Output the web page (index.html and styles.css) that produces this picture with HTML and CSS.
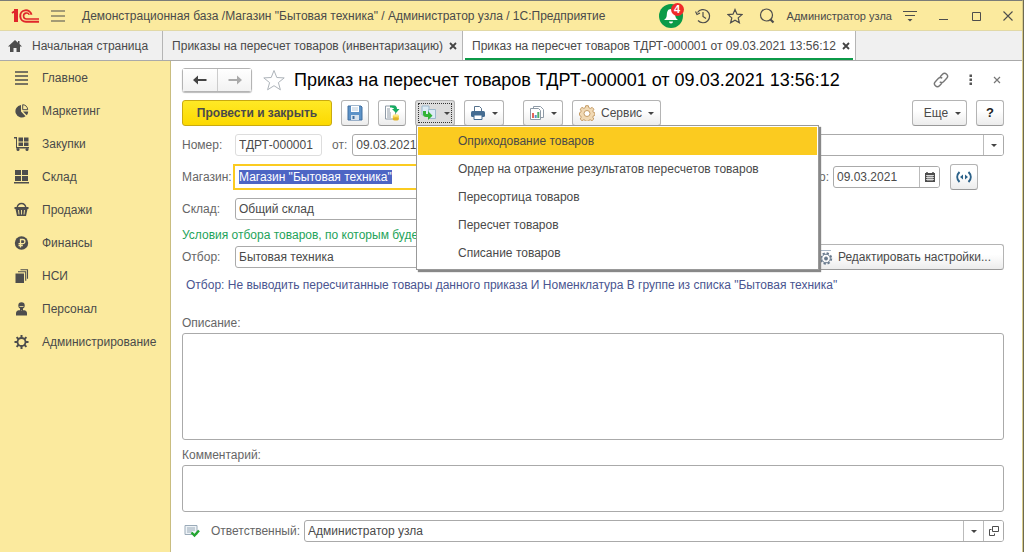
FILE: index.html
```html
<!DOCTYPE html>
<html lang="ru">
<head>
<meta charset="utf-8">
<title>Приказ на пересчет товаров</title>
<link rel="stylesheet" href="styles.css">
</head>
<body>
<div class="window">
  <header class="titlebar">
    <svg class="logo" viewBox="0 0 30 16" width="30" height="16" fill="none" stroke="#e0262b" stroke-width="2"><path d="M1 5l3-2v11M3 2h3v12"/><path d="M28 13.700H15a5.700 5.700 0 1 1 5.500-7"/><path d="M28 11H15.500a3 3 0 1 1 2.800-4.200" stroke-width="1.600"/></svg>
    <button class="icon-btn menu-btn" aria-label="Меню"><svg width="14" height="14" viewBox="0 0 14 14" stroke="#4d4d4d" stroke-width="1.200"><path d="M0 2h14M0 7h14M0 12h14"/></svg></button>
    <div class="app-title">Демонстрационная база /Магазин "Бытовая техника" / Администратор узла / 1С:Предприятие</div>
    <div class="title-tools">
      <button class="icon-btn bell" aria-label="Уведомления"><svg width="24" height="24" viewBox="0 0 24 24"><circle cx="12" cy="12" r="12" fill="#0b9a48"/><path d="M12 5c-3.500 0-4 3-4.200 6-.200 2.500-1 3.500-2.800 5h14c-1.800-1.500-2.600-2.500-2.800-5C16 8 15.500 5 12 5zM10 17.500h4a2 2 0 0 1-4 0z" fill="#fff"/></svg><span class="badge">4</span></button>
      <button class="icon-btn" aria-label="История"><svg width="16" height="16" viewBox="0 0 16 16" fill="none" stroke="#4d4d4d" stroke-width="1.200"><path d="M2.500 4.500A6.600 6.600 0 1 1 3 12.500M8 4v4.500l3 2"/><path d="M.5 3.500l1.500 3 3-1.500"/></svg></button>
      <button class="icon-btn" aria-label="Избранное"><svg width="16" height="16" viewBox="0 0 16 16" fill="none" stroke="#4d4d4d" stroke-width="1.200"><path d="M8 1.500l2 4.700 5 .4-3.800 3.300 1.200 4.900L8 12.200l-4.400 2.600 1.200-4.900L1 6.600l5-.4z"/></svg></button>
      <button class="icon-btn" aria-label="Поиск"><svg width="16" height="16" viewBox="0 0 16 16" fill="none" stroke="#4d4d4d"><circle cx="7.500" cy="7" r="6" stroke-width="1.200"/><path d="M11.500 11.500L14.500 14.500" stroke-width="2.200"/></svg></button>
      <span class="user">Администратор узла</span>
      <button class="icon-btn" aria-label="Настройки"><svg width="14" height="14" viewBox="0 0 14 14" stroke="#4d4d4d" stroke-width="1.200"><path d="M0 2.500h14M2 6.500h10"/><path d="M4.500 10h5L7 12.500z" fill="#4d4d4d" stroke="none"/></svg></button>
      <div class="win-controls">
        <button class="icon-btn" aria-label="Свернуть"><svg width="10" height="10" viewBox="0 0 10 10" stroke="#4d4d4d"><path d="M0 8.500h9"/></svg></button>
        <button class="icon-btn" aria-label="Развернуть"><svg width="10" height="10" viewBox="0 0 10 10" fill="none" stroke="#4d4d4d"><path d="M1.500 1.500h8v8h-8z"/></svg></button>
        <button class="icon-btn" aria-label="Закрыть окно"><svg width="10" height="10" viewBox="0 0 10 10" stroke="#4d4d4d" stroke-width="1.100"><path d="M.5.500l9 9M9.500.500l-9 9"/></svg></button>
      </div>
    </div>
  </header>

  <nav class="tabs">
    <a class="tab tab-home" href="#"><svg width="14" height="12" viewBox="0 0 14 12" fill="#4d4d4d"><path d="M7 0L0 6.500h2V12h3.500V8h3v4H12V6.500h2L11.500 4V1H10v1.700z"/></svg>Начальная страница</a>
    <div class="tab"><a href="#">Приказы на пересчет товаров (инвентаризацию)</a><button class="icon-btn" aria-label="Закрыть вкладку"><svg width="8" height="8" viewBox="0 0 8 8" stroke="#444" stroke-width="1.800"><path d="M1 1l6 6M7 1L1 7"/></svg></button></div>
    <div class="tab tab-active"><a href="#">Приказ на пересчет товаров ТДРТ-000001 от 09.03.2021 13:56:12</a><button class="icon-btn" aria-label="Закрыть вкладку"><svg width="8" height="8" viewBox="0 0 8 8" stroke="#444" stroke-width="1.800"><path d="M1 1l6 6M7 1L1 7"/></svg></button></div>
  </nav>

  <div class="body">
    <nav class="sidebar">
      <a href="#"><svg width="16" height="16" viewBox="0 0 16 16" stroke="#4d4d4d" stroke-width="1.600"><path d="M1 2h13M1 6h13M1 10h13M1 14h13"/></svg>Главное</a>
      <a href="#"><svg width="16" height="16" viewBox="0 0 16 16" fill="#4d4d4d"><path d="M7 2v6.500l4.500 4.800A6.300 6.300 0 1 1 7 2z"/><path d="M8.700 1.700a5.500 5.500 0 0 1 5 5h-5z" fill="none" stroke="#4d4d4d"/><path d="M9 8.500h5.200c0 1.500-.6 2.800-1.500 3.800z"/></svg>Маркетинг</a>
      <a href="#"><svg width="16" height="16" viewBox="0 0 16 16" fill="#4d4d4d"><path d="M0 1h3v10h12v1.500H2V2.500H0zM4.500 1.500h4.500v4H4.500zM10 1.500h4.500v4H10zM4.500 6.500h4.500v3.500H4.500zM10 6.500h4.500v3.500H10z"/><circle cx="4" cy="13.500" r="1.500"/><circle cx="13" cy="13.500" r="1.500"/></svg>Закупки</a>
      <a href="#"><svg width="16" height="16" viewBox="0 0 16 16" fill="#4d4d4d"><path d="M1 1h6v5H1zM8 1h6v5H8zM1 7h6v5H1zM8 7h6v5H8zM0 13h15v1.500H0z"/></svg>Склад</a>
      <a href="#"><svg width="16" height="16" viewBox="0 0 16 16" fill="#4d4d4d"><path d="M3 6c1-6 8-6 9 0" fill="none" stroke="#4d4d4d" stroke-width="1.300"/><path d="M.5 5h14v2h-1l-1.500 7H3L1.500 7h-1z"/><path d="M4.500 8l.5 4.500M7.500 8v4.500M10.500 8l-.5 4.500" stroke="#fbea9e" stroke-width=".9"/></svg>Продажи</a>
      <a href="#"><svg width="16" height="16" viewBox="0 0 16 16"><circle cx="7.500" cy="8" r="6.700" fill="#4d4d4d"/><path d="M6.500 12.500V4.500h2.300a2 2 0 0 1 0 4.200H4.500M4.500 10.500h4.300" fill="none" stroke="#fbea9e" stroke-width="1.300"/></svg>Финансы</a>
      <a href="#"><svg width="16" height="16" viewBox="0 0 16 16" fill="#4d4d4d"><path d="M1.500 5.500h8.500V15H1.500z"/><path d="M4 3.700h7.700v9M6.500 1.700h7v9" fill="none" stroke="#4d4d4d" stroke-width="1.100"/></svg>НСИ</a>
      <a href="#"><svg width="16" height="16" viewBox="0 0 16 16" fill="#4d4d4d"><circle cx="7.500" cy="4.500" r="3.200"/><path d="M6 7h3v2.500H6zM2 14.500V12c0-2 2-3 4-3l1.500 1L9 9c2 0 4 1 4 3v2.500z"/><path d="M5.500 5.500h4" stroke="#fbea9e" stroke-width=".8"/></svg>Персонал</a>
      <a href="#"><svg width="16" height="16" viewBox="0 0 16 16" fill="none" stroke="#4d4d4d"><circle cx="7.500" cy="8" r="4" stroke-width="1.800"/><path d="M7.500 1v3M7.500 12v3M.5 8h3M11.500 8h3M2.600 3.100l2.100 2.100M10.300 10.800l2.100 2.100M12.400 3.100l-2.100 2.100M4.700 10.800l-2.100 2.100" stroke-width="2"/></svg>Администрирование</a>
    </nav>

    <main class="content">
      <div class="heading">
        <div class="nav-group">
          <button aria-label="Назад"><svg width="14" height="10" viewBox="0 0 14 10" fill="#444"><path d="M0 5l5-4.500V4h8.500v2H5v3.500z"/></svg></button>
          <button aria-label="Вперед"><svg width="14" height="10" viewBox="0 0 14 10" fill="#aaa"><path d="M14 5L9 .5V4H.5v2H9v3.500z"/></svg></button>
        </div>
        <button class="icon-btn fav" aria-label="В избранное"><svg width="24" height="22" viewBox="0 0 24 22" fill="#fff" stroke="#aeb4ba"><path d="M12 1.500l2.800 7 7.400.4-5.800 4.700 2 7.200L12 16.700l-6.400 4.100 2-7.200L1.800 8.900l7.400-.4z"/></svg></button>
        <h1>Приказ на пересчет товаров ТДРТ-000001 от 09.03.2021 13:56:12</h1>
        <div class="heading-tools">
          <button class="icon-btn" aria-label="Ссылка"><svg width="16" height="16" viewBox="0 0 16 16" fill="none" stroke="#777" stroke-width="1.400"><path d="M7 5l2.500-2.700a2.800 2.800 0 0 1 4.200 4L10.500 9.700a2.600 2.600 0 0 1-3.700 0M9 11l-2.500 2.700a2.800 2.800 0 0 1-4.200-4L5.500 6.300a2.600 2.600 0 0 1 3.700 0"/></svg></button>
          <button class="icon-btn" aria-label="Ещё действия"><svg width="4" height="12" viewBox="0 0 4 12" fill="#555"><path d="M.5.500h2.500V3H.5zM.5 4.500h2.500V7H.5zM.5 8.500h2.500V11H.5z"/></svg></button>
          <button class="icon-btn" aria-label="Закрыть"><svg width="8" height="8" viewBox="0 0 8 8" stroke="#777" stroke-width="1.200"><path d="M1 1l6 6M7 1L1 7"/></svg></button>
        </div>
      </div>

      <div class="commands">
        <button class="btn btn-main">Провести и закрыть</button>
        <button class="btn" aria-label="Записать"><svg width="16" height="16" viewBox="0 0 16 16"><path d="M1 1h13l1 1v13H1z" fill="#5d93c8" stroke="#416f9f"/><path d="M4 1h8v6H4z" fill="#fff"/><path d="M5 3h6M5 5h6" stroke="#b5c9dd"/><path d="M4 10h8v5H4z" fill="#d8e3ee"/><path d="M5.500 11h2v3h-2z" fill="#416f9f"/></svg></button>
        <button class="btn" aria-label="Провести"><svg width="16" height="16" viewBox="0 0 16 16"><path d="M1.500 1h10v13h-10z" fill="#fff" stroke="#8e9aa6"/><path d="M3 4h3M3 6h3M3 8h4M3 10h4M3 12h4" stroke="#8e9aa6"/><path d="M6 .5h3c3 0 4 1.500 4 3.500h2.500L12 8 8 4h2c0-1-1.500-1.500-4-1.500z" fill="#17ac62"/><path d="M8.800 10.500h6V14h-6z" fill="#f0c93f"/><ellipse cx="11.800" cy="14" rx="3" ry="1.500" fill="#dfb22c"/><ellipse cx="11.800" cy="10.500" rx="3" ry="1.300" fill="#ffe987"/></svg></button>
        <div class="menu-anchor">
          <button class="btn btn-drop btn-pressed" aria-label="Создать на основании" aria-expanded="true"><svg width="18" height="16" viewBox="0 0 18 16"><path d="M2 1h7v9H2z" fill="#dcebf5" stroke="#9db9cd"/><path d="M8.500 4.500h7v9h-7z" fill="#dcebf5" stroke="#9db9cd"/><path d="M3 6h3v3h2V6l4.500 4.700L8 15v-3H6c-2 0-3-1-3-3z" fill="#32b335"/></svg><i class="caret"></i></button>
          <div class="menu" role="menu">
            <button role="menuitem" class="menu-item is-active">Оприходование товаров</button>
            <button role="menuitem" class="menu-item">Ордер на отражение результатов пересчетов товаров</button>
            <button role="menuitem" class="menu-item">Пересортица товаров</button>
            <button role="menuitem" class="menu-item">Пересчет товаров</button>
            <button role="menuitem" class="menu-item">Списание товаров</button>
          </div>
        </div>
        <button class="btn btn-drop" aria-label="Печать"><svg width="16" height="16" viewBox="0 0 16 16"><path d="M4.500 6V1.500h5l2 2V6" fill="#fff" stroke="#55718c"/><rect x="1" y="6" width="14" height="6" rx="1.500" fill="#456c91"/><path d="M4 10h8v4.500H4z" fill="#fff" stroke="#456c91"/></svg><i class="caret"></i></button>
        <button class="btn btn-drop btn-report" aria-label="Отчеты"><svg width="16" height="16" viewBox="0 0 16 16"><path d="M4.500 1.500h7l3 3v8h-10z" fill="#fff" stroke="#8e9aa6"/><path d="M1.500 3.500h8l2 2v9h-10z" fill="#fff" stroke="#8e9aa6"/><path d="M3 8h2v5H3z" fill="#e4655c"/><path d="M5.700 10h2v3h-2z" fill="#5b94c9"/><path d="M8.300 7h2v6h-2z" fill="#51b06a"/></svg><i class="caret"></i></button>
        <button class="btn btn-service"><svg width="16" height="16" viewBox="0 0 16 16" fill="#f1d9b4" stroke="#c59c66"><path d="M6.700.700h2.600l.5 2 1.500.7 1.900-1 1.700 1.800-1.100 1.800.6 1.400 1.500.4v2.500l-1.500.5-.6 1.400 1 1.800-1.800 1.700-1.800-1-1.400.6-.5 1H6.700l-.5-1-1.400-.6-1.800 1L1.200 14l1-1.800-.6-1.400-1.100-.5V7.800l1.100-.4.600-1.400-1-1.800L3 2.400l1.900 1 1.300-.7z"/><circle cx="8" cy="8.500" r="3" fill="#fff"/></svg><span>Сервис</span><i class="caret"></i></button>
        <button class="btn btn-more">Еще<i class="caret"></i></button>
        <button class="btn btn-help" aria-label="Справка">?</button>
      </div>

      <div class="row">
        <label class="caption" for="num">Номер:</label>
        <input class="field field-num" id="num" value="ТДРТ-000001" readonly>
        <label class="from" for="date">от:</label>
        <input class="field field-date" id="date" value="09.03.2021 13:56:12">
        <div class="combo grow"><input aria-label="Состояние"><button aria-label="Выбрать"><i class="caret"></i></button></div>
      </div>

      <div class="row">
        <label class="caption" for="shop">Магазин:</label>
        <input class="field field-wide is-focused" id="shop" value='Магазин "Бытовая техника"'>
        <div class="period">
          <label for="till">по:</label>
          <div class="combo combo-date"><input id="till" value="09.03.2021"><button aria-label="Календарь"><svg width="10" height="10" viewBox="0 0 10 10"><path d="M0 1h10v9H0z" fill="#4d4d4d"/><path d="M2 0v2M8 0v2" stroke="#4d4d4d" stroke-width="1.500"/><path d="M1 3.500h8M1 5.500h8M1 7.500h8M3 3v6M5 3v6M7 3v6" stroke="#fff" stroke-width=".7"/></svg></button></div>
          <button class="btn btn-period" aria-label="Период"><svg width="16" height="12" viewBox="0 0 16 12" fill="none" stroke="#2b6189" stroke-width="2"><path d="M3.500 1c-3 3-3 7 0 10M12.500 1c3 3 3 7 0 10"/><path d="M4 6l3-2.500v5zM12 6L9 3.500v5z" fill="#2b6189" stroke="none"/></svg></button>
        </div>
      </div>

      <div class="row row-store">
        <label class="caption" for="store">Склад:</label>
        <input class="field field-wide" id="store" value="Общий склад">
      </div>

      <p class="hint">Условия отбора товаров, по которым будет произведен пересчет</p>

      <div class="row">
        <label class="caption" for="filter">Отбор:</label>
        <input class="field field-wide" id="filter" value="Бытовая техника">
        <button class="btn btn-edit"><svg width="16" height="16" viewBox="0 0 16 16" fill="none" stroke="#66788c"><path d="M0 1.500h14M0 4.500h4" stroke="#a9b7c6"/><circle cx="9" cy="9.500" r="5.300" stroke-width="1.800" stroke-dasharray="2.300 1.860"/><circle cx="9" cy="9.500" r="4.300"/><circle cx="9" cy="9.500" r="1.500" fill="#66788c"/></svg>Редактировать настройки...</button>
      </div>

      <p class="summary">Отбор: Не выводить пересчитанные товары данного приказа И Номенклатура В группе из списка "Бытовая техника"</p>

      <label class="block-label" for="descr">Описание:</label>
      <textarea class="area area-descr" id="descr"></textarea>
      <label class="block-label" for="comment">Комментарий:</label>
      <textarea class="area area-comment" id="comment"></textarea>

      <div class="row row-owner">
        <svg width="16" height="14" viewBox="0 0 16 14"><path d="M1 1.500h12v9H1z" fill="#eef3f7" stroke="#9aaab8"/><path d="M3 4h8M3 6h8M3 8h5" stroke="#9aaab8"/><path d="M7.500 8.500l3 3 4.500-5" fill="none" stroke="#22a52f" stroke-width="2.400"/></svg>
        <label for="owner">Ответственный:</label>
        <div class="combo grow"><input id="owner" value="Администратор узла"><button aria-label="Выбрать"><i class="caret"></i></button><button aria-label="Открыть"><svg width="10" height="10" viewBox="0 0 10 10" fill="none" stroke="#4d4d4d"><path d="M3.500.500h6v5h-6zM2.500 3.500h-2v6h5v-2"/></svg></button></div>
      </div>
    </main>
  </div>
</div>
<script src="app.js"></script>
</body>
</html>
```
FILE: styles.css
```css
* { box-sizing: border-box; }

body {
  margin: 0;
  background: #6d6a52;
  color: #4a4a4a;
  font: 12px/14px "Liberation Sans", Arial, sans-serif;
}

button, input, textarea { font: inherit; color: inherit; }
button { margin: 0; padding: 0; }
a { color: inherit; text-decoration: none; }
svg { flex: none; display: block; }

.window {
  display: flex;
  flex-direction: column;
  min-height: 100vh;
  margin-right: 1px;
  border-top: 1px solid #7b7d78;
  border-right: 1px solid #d9cc8a;
  background: #fff;
}

.icon-btn {
  display: flex;
  align-items: center;
  justify-content: center;
  border: 0;
  background: none;
}

.titlebar {
  display: flex;
  align-items: center;
  height: 30px;
  padding: 0 9px 0 11px;
  background: #fbea9e;
  border-bottom: 1px solid #e2d9a6;
}
.menu-btn { margin: 0 17px 0 10px; }
.app-title { flex: 1; white-space: nowrap; }
.title-tools { display: flex; align-items: center; gap: 16px; }
.bell { position: relative; margin-right: -4px; }
.badge {
  position: absolute;
  top: -1px;
  right: -1px;
  width: 13px;
  height: 13px;
  border-radius: 50%;
  background: #f02a2a;
  color: #fff;
  font-size: 11px;
  font-weight: bold;
  line-height: 13px;
}
.user { margin: 0 -5px 0 -4px; font-size: 11px; }
.win-controls { display: flex; gap: 22px; margin-left: 6px; }

.tabs {
  display: flex;
  height: 30px;
  background: #f0f0f0;
  border-bottom: 1px solid #aaa;
}
.tab {
  display: flex;
  align-items: center;
  gap: 6px;
  padding: 0 5px 0 9px;
  border-right: 1px solid #b5b5b5;
  white-space: nowrap;
}
.tab-home { gap: 10px; padding: 0 14px 0 8px; }
.tab-active { background: linear-gradient(#0b9a48, #0b9a48) 2px 100% / calc(100% - 4px) 2px no-repeat #fff; }

.body { display: flex; flex: 1; }
.sidebar {
  display: flex;
  flex: none;
  flex-direction: column;
  width: 171px;
  background: #fbea9e;
  border-right: 1px solid #c9bd80;
}
.sidebar a {
  display: flex;
  align-items: center;
  gap: 12px;
  height: 33px;
  padding-left: 14px;
}

.content {
  display: flex;
  flex: 1;
  flex-direction: column;
  min-width: 0;
  padding: 7px 18px 10px 11px;
}

.heading { display: flex; align-items: center; height: 24px; }
.nav-group { display: flex; border: 1px solid #b4b4b4; border-radius: 3px; box-shadow: 0 1px 1px #bbb; }
.nav-group button {
  display: flex;
  align-items: center;
  justify-content: center;
  width: 34px;
  height: 22px;
  border: 0;
  background: linear-gradient(#fff, #f2f2f2);
}
.nav-group button + button { border-left: 1px solid #ccc; }
.fav { margin: 0 8px 0 10px; }
h1 { flex: 1; margin: 0; color: #000; font-size: 18px; font-weight: normal; line-height: 20px; white-space: nowrap; }
.heading-tools { display: flex; gap: 20px; padding-right: 3px; }

.commands { display: flex; gap: 9px; height: 26px; margin: 8px 0; }
.btn {
  display: flex;
  align-items: center;
  justify-content: center;
  gap: 6px;
  min-width: 28px;
  height: 26px;
  padding: 0 5px;
  border: 1px solid #b4b4b4;
  border-bottom-color: #999;
  border-radius: 3px;
  background: linear-gradient(#fff 40%, #ececec);
  white-space: nowrap;
}
.btn-main {
  width: 150px;
  border-color: #c9aa10;
  background: linear-gradient(#ffe926, #fcd900);
  font-weight: bold;
}
.btn-drop { width: 40px; }
.btn-service { padding: 0 6px; }
.btn-report { margin-left: 10px; }
.btn-more { width: 55px; margin-left: auto; gap: 7px; padding: 0 4px 0 10px; }
.btn-help { color: #222; font-size: 13px; font-weight: bold; }
.btn-pressed { background: #dcdcdc; outline: 1px dotted #333; outline-offset: -4px; }
.caret { border: 3px solid transparent; border-top-color: #444; border-bottom: 0; }

.menu-anchor { position: relative; }
.menu {
  position: absolute;
  z-index: 5;
  top: 25px;
  left: 1px;
  width: 403px;
  padding: 1px 1px 2px;
  border: 1px solid #999;
  background: #fff;
  box-shadow: 2px 2px 1px #888;
}
.menu-item {
  display: block;
  width: 100%;
  height: 28px;
  padding-left: 40px;
  border: 0;
  background: none;
  text-align: left;
}
.menu-item.is-active { background: #fbcb20; }

.row { display: flex; align-items: center; height: 22px; margin-bottom: 10px; }
.row-store { margin-bottom: 8px; }
.caption { flex: none; width: 53px; color: #666; }
.field, .combo {
  height: 22px;
  border: 1px solid #aaa;
  border-radius: 3px;
  background: #fff;
}
.field { padding: 0 3px; }
.field-num { width: 87px; border-color: #ddd; }
.from { margin: 0 5px 0 10px; color: #666; }
.field-date { width: 140px; margin-right: 100px; }
.field-wide { width: 330px; }
.field.is-focused { outline: 2px solid #fbcb20; border-color: #fff; border-radius: 0; }
.is-focused::selection { background: #4d65c4; color: #fff; }
.grow { flex: 1; }
.combo { display: flex; overflow: hidden; }
.combo input { flex: 1; min-width: 0; padding: 0 3px; border: 0; outline: 0; background: none; }
.combo button {
  display: flex;
  align-items: center;
  justify-content: center;
  width: 20px;
  border: 0;
  border-left: 1px solid #bbb;
  background: #fff;
}
.period { display: flex; align-items: center; gap: 4px; margin-left: auto; padding-right: 26px; color: #666; }
.combo-date { width: 107px; margin-right: 6px; color: #4a4a4a; }

.hint { margin: 0 0 4px; color: #1ea35a; }
.btn-edit { margin-left: auto; gap: 5px; padding: 0 12px 0 10px; }
.summary { margin: 0 0 24px 4px; color: #4a5590; }
.block-label { margin-bottom: 3px; color: #666; }
.area {
  border: 1px solid #aaa;
  border-radius: 3px;
  background: #fff;
  resize: none;
}
.area-descr { flex: 1; min-height: 80px; margin-bottom: 8px; }
.area-comment { height: 47px; margin-bottom: 8px; }
.row-owner { margin-bottom: 0; padding-left: 2px; }
.row-owner label { margin: 0 4px 0 11px; color: #666; }
```
FILE: app.js
```js
const shop = document.getElementById('shop');
shop.focus();
shop.select();
```
